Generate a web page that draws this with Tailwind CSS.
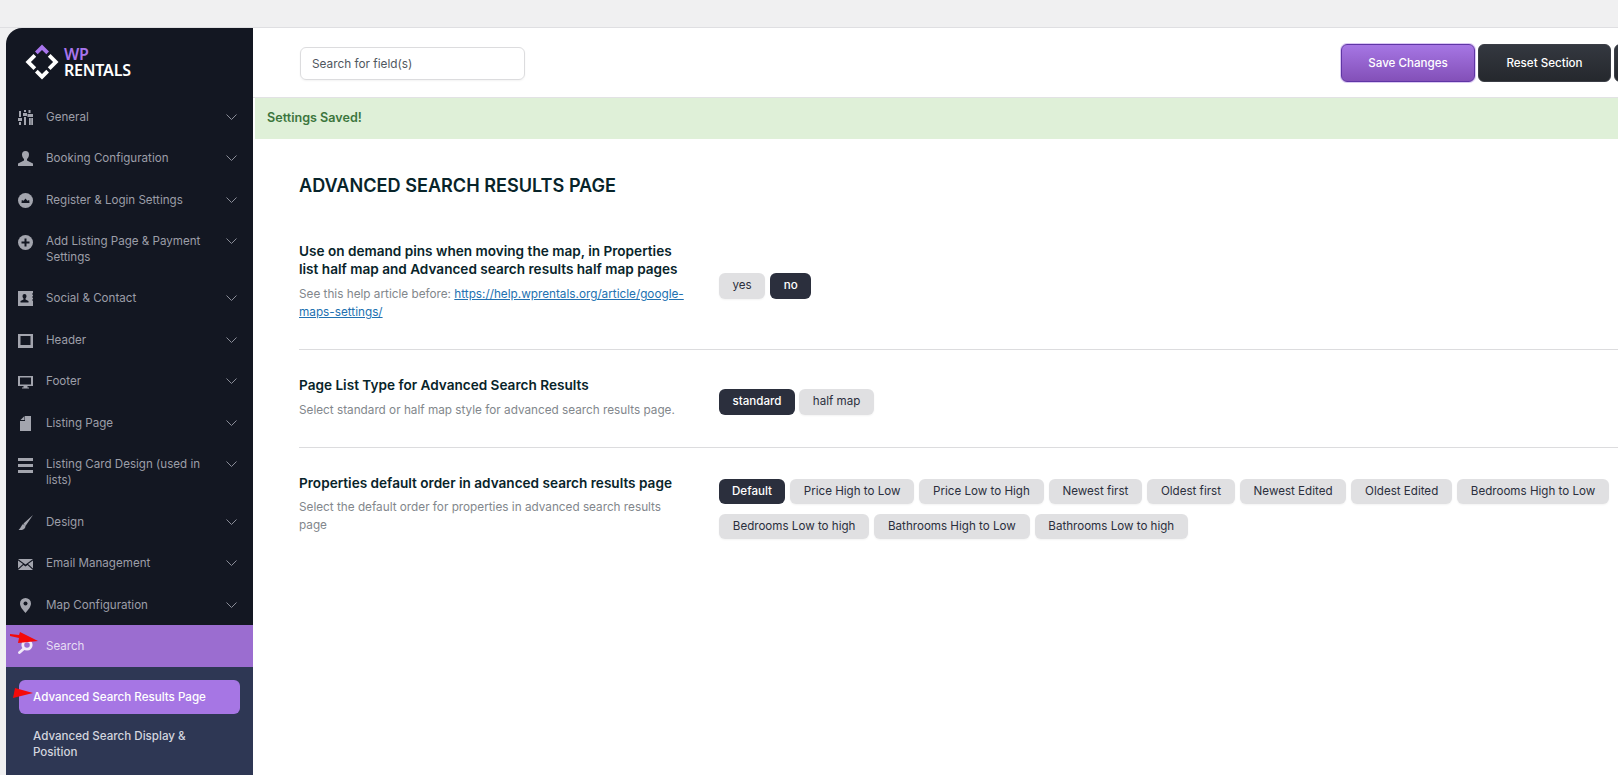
<!DOCTYPE html>
<html lang="en">
  <head>
    <meta charset="UTF-8" />
    <title>WP Rentals Options</title>
    <script src="https://cdn.jsdelivr.net/npm/@tailwindcss/browser@4"></script>
  </head>
  <body class="h-[775px] overflow-hidden bg-[#f0f0f1] font-['Inter',sans-serif] text-[11.6px]">
    <div class="flex h-[775px] flex-col">
      <div class="h-[28px] shrink-0 border-b border-[#dfdfe2]"></div>
      <div class="flex min-h-0 flex-1 pl-[6px]">
        <!-- sidebar -->
        <aside class="relative w-[247px] shrink-0 overflow-hidden rounded-tl-2xl bg-[#131722] text-[#9c9ea8]">
          <div class="flex h-[68px] items-start pl-[19px] pt-[16px]">
            <svg class="h-[36px] w-[34px]" viewBox="0 0 34 36">
              <path d="M10 7.500 17 0.500l7 7-2.700 2.700L17 5.900l-4.300 4.300z" fill="#a875ec" />
              <path d="M8.500 10 0.500 18l8 8 2.700-2.700L5.900 18l5.300-5.300zM25.500 10l8 8-8 8-2.700-2.700L28.100 18l-5.300-5.300zM10 28.500l7 7 7-7-2.700-2.700-4.300 4.300-4.300-4.300z" fill="#fff" />
            </svg>
            <div class="ml-[5px] mt-[2px] font-['Noto_Sans',sans-serif] text-[16px] leading-[16px] font-semibold tracking-[-0.2px]">
              <div class="text-[#a875ec]">WP</div>
              <div class="text-white">RENTALS</div>
            </div>
          </div>

          <nav class="leading-[16px]">
            <a class="flex py-[12.73px] pl-[12px] pr-[16px]">
              <svg class="mt-[1px] h-[15px] w-[15px] shrink-0" viewBox="0 0 15 15" fill="#a3a5ae"><path d="M1 1h2v6H1zM0 8h4v3H0zM1 12h2v3H1zM6 0h2v2H6zM5 3h4v3H5zM6 7h2v8H6zM10.500 0h2v3h-2zM9.500 4H15v3H9.500zM11 8h1.800v7H11zM13.200 8H15v7h-1.800z" /></svg>
              <span class="ml-[13px] flex-1">General</span>
              <svg class="mt-[5px] h-[6px] w-[11px] shrink-0" viewBox="0 0 11 6" fill="none" stroke="#8a8d98"><path d="m.5.500 5 5 5-5" /></svg>
            </a>
            <a class="flex py-[12.73px] pl-[12px] pr-[16px]">
              <svg class="mt-[1px] h-[15px] w-[15px] shrink-0" viewBox="0 0 15 15" fill="#a3a5ae"><path d="M7.500 0a3.500 3.500 0 0 1 3.500 3.500c0 2-1 3.500-2 4.500v1.500l6 3V15H0v-2.500l6-3V8C5 7 4 5.500 4 3.500A3.500 3.500 0 0 1 7.500 0z" /></svg>
              <span class="ml-[13px] flex-1">Booking Configuration</span>
              <svg class="mt-[5px] h-[6px] w-[11px] shrink-0" viewBox="0 0 11 6" fill="none" stroke="#8a8d98"><path d="m.5.500 5 5 5-5" /></svg>
            </a>
            <a class="flex py-[12.73px] pl-[12px] pr-[16px]">
              <svg class="mt-[1px] h-[15px] w-[15px] shrink-0" viewBox="0 0 15 15"><circle cx="7.500" cy="7.500" r="7.500" fill="#a3a5ae" /><path d="M3.500 10 3.800 7l1.800.8L7.500 5.500l1.900 2.300 1.800-.8.300 3z" fill="#131722" /></svg>
              <span class="ml-[13px] flex-1">Register &amp; Login Settings</span>
              <svg class="mt-[5px] h-[6px] w-[11px] shrink-0" viewBox="0 0 11 6" fill="none" stroke="#8a8d98"><path d="m.5.500 5 5 5-5" /></svg>
            </a>
            <a class="flex py-[12.73px] pl-[12px] pr-[16px]">
              <svg class="mt-[2px] h-[15px] w-[15px] shrink-0" viewBox="0 0 15 15"><circle cx="7.500" cy="7.500" r="7.500" fill="#a3a5ae" /><path d="M6.500 3.500h2v3h3v2h-3v3h-2v-3h-3v-2h3z" fill="#131722" /></svg>
              <span class="ml-[13px] flex-1">Add Listing Page &amp; Payment Settings</span>
              <svg class="ml-[10px] mt-[5px] h-[6px] w-[11px] shrink-0" viewBox="0 0 11 6" fill="none" stroke="#8a8d98"><path d="m.5.500 5 5 5-5" /></svg>
            </a>
            <a class="flex py-[12.73px] pl-[12px] pr-[16px]">
              <svg class="mt-[1px] h-[15px] w-[15px] shrink-0" viewBox="0 0 15 15"><path d="M0 0h15v2.500h-1v1h1v2h-1v1h1v2h-1v1h1V15H0z" fill="#a3a5ae" /><path d="M6.500 3a2 2 0 0 1 2 2c0 1-.5 2-1 2.500V8.500l3 1.500v1.500h-8V10l3-1.500v-1C5 7 4.500 6 4.500 5a2 2 0 0 1 2-2z" fill="#131722" /></svg>
              <span class="ml-[13px] flex-1">Social &amp; Contact</span>
              <svg class="mt-[5px] h-[6px] w-[11px] shrink-0" viewBox="0 0 11 6" fill="none" stroke="#8a8d98"><path d="m.5.500 5 5 5-5" /></svg>
            </a>
            <a class="flex py-[12.73px] pl-[12px] pr-[16px]">
              <svg class="mt-[1px] h-[15px] w-[15px] shrink-0" viewBox="0 0 15 15"><path d="M0 1h15v14H0z" fill="#a3a5ae" /><path d="M2.500 3h10v9h-10z" fill="#131722" /></svg>
              <span class="ml-[13px] flex-1">Header</span>
              <svg class="mt-[5px] h-[6px] w-[11px] shrink-0" viewBox="0 0 11 6" fill="none" stroke="#8a8d98"><path d="m.5.500 5 5 5-5" /></svg>
            </a>
            <a class="flex py-[12.73px] pl-[12px] pr-[16px]">
              <svg class="mt-[1px] h-[15px] w-[15px] shrink-0" viewBox="0 0 15 15"><path d="M0 2h15v10H9.500v1.500H11V14.500H4v-1h1.500V12H0z" fill="#a3a5ae" /><path d="M2 3.500h11v7H2z" fill="#131722" /></svg>
              <span class="ml-[13px] flex-1">Footer</span>
              <svg class="mt-[5px] h-[6px] w-[11px] shrink-0" viewBox="0 0 11 6" fill="none" stroke="#8a8d98"><path d="m.5.500 5 5 5-5" /></svg>
            </a>
            <a class="flex py-[12.73px] pl-[12px] pr-[16px]">
              <svg class="mt-[1px] h-[15px] w-[15px] shrink-0" viewBox="0 0 15 15" fill="#a3a5ae"><path d="M7 0h6v15H2V5h5zM2.500 4 6.500 0v4z" /></svg>
              <span class="ml-[13px] flex-1">Listing Page</span>
              <svg class="mt-[5px] h-[6px] w-[11px] shrink-0" viewBox="0 0 11 6" fill="none" stroke="#8a8d98"><path d="m.5.500 5 5 5-5" /></svg>
            </a>
            <a class="flex py-[12.73px] pl-[12px] pr-[16px]">
              <svg class="mt-[2px] h-[15px] w-[15px] shrink-0" viewBox="0 0 15 15" fill="#a3a5ae"><path d="M0 0h15v3H0zM0 6h15v3H0zM0 12h15v3H0z" /></svg>
              <span class="ml-[13px] flex-1">Listing Card Design (used in lists)</span>
              <svg class="ml-[10px] mt-[5px] h-[6px] w-[11px] shrink-0" viewBox="0 0 11 6" fill="none" stroke="#8a8d98"><path d="m.5.500 5 5 5-5" /></svg>
            </a>
            <a class="flex py-[12.73px] pl-[12px] pr-[16px]">
              <svg class="mt-[1px] h-[15px] w-[15px] shrink-0" viewBox="0 0 15 15" fill="#a3a5ae"><path d="M15 0 7.500 11 5 9C3.500 10 3 13 0 15.500 3.500 15.500 7 14.500 7.500 11.500L5.500 8.500z" /></svg>
              <span class="ml-[13px] flex-1">Design</span>
              <svg class="mt-[5px] h-[6px] w-[11px] shrink-0" viewBox="0 0 11 6" fill="none" stroke="#8a8d98"><path d="m.5.500 5 5 5-5" /></svg>
            </a>
            <a class="flex py-[12.73px] pl-[12px] pr-[16px]">
              <svg class="mt-[1px] h-[15px] w-[15px] shrink-0" viewBox="0 0 15 15" fill="#a3a5ae"><path d="M0 3h15L7.500 8.500zM0 4.500v8l5-4.500zM15 4.500v8l-5-4.500zM0 14l5.500-5 2 1.500 2-1.500L15 14z" /></svg>
              <span class="ml-[13px] flex-1">Email Management</span>
              <svg class="mt-[5px] h-[6px] w-[11px] shrink-0" viewBox="0 0 11 6" fill="none" stroke="#8a8d98"><path d="m.5.500 5 5 5-5" /></svg>
            </a>
            <a class="flex py-[12.73px] pl-[12px] pr-[16px]">
              <svg class="mt-[1px] h-[15px] w-[15px] shrink-0" viewBox="0 0 15 15"><path d="M7.500 0A5.500 5.500 0 0 1 13 5.500C13 9 9.500 12.500 7.500 15 5.500 12.500 2 9 2 5.500A5.500 5.500 0 0 1 7.500 0z" fill="#a3a5ae" /><circle cx="7.500" cy="5.500" r="2" fill="#131722" /></svg>
              <span class="ml-[13px] flex-1">Map Configuration</span>
              <svg class="mt-[5px] h-[6px] w-[11px] shrink-0" viewBox="0 0 11 6" fill="none" stroke="#8a8d98"><path d="m.5.500 5 5 5-5" /></svg>
            </a>
            <a class="flex bg-[#9b6dd0] py-[12.73px] pl-[12px] pr-[16px] text-[#e6dcf4]">
              <svg class="mt-[1px] h-[15px] w-[15px] shrink-0" viewBox="0 0 15 15" fill="none"><circle cx="9" cy="6" r="4.200" stroke="#f0eaf8" stroke-width="2.800" /><path d="M6 9.500 1.500 13.500" stroke="#f0eaf8" stroke-width="2.800" stroke-linecap="round" /></svg>
              <span class="ml-[13px] flex-1">Search</span>
            </a>
          </nav>

          <div class="h-[200px] bg-[#2e3754] px-[13px] pt-[13px] font-medium leading-[16px] text-[#d3d5df]">
            <a class="block rounded-md bg-[#a676e4] py-[9px] pl-[14px] text-white">Advanced Search Results Page</a>
            <a class="block py-[14px] pl-[14px] pr-[20px]">Advanced Search Display &amp; Position</a>
          </div>

          <!-- red arrows drawn on top of the screenshot -->
          <svg class="absolute left-0 top-[597px] h-[80px] w-[60px]" viewBox="0 0 60 80" fill="#f50a0a">
            <path d="M4 9l9 1 1-3 18 9-20 2 1-5-9-2z" />
            <path d="M9 63l18 5-20 5z" />
          </svg>
        </aside>

        <!-- main -->
        <main class="min-w-0 flex-1 bg-white">
          <header class="flex h-[70px] items-start border-b border-[#e2e2e4]">
            <input type="text" placeholder="Search for field(s)" class="ml-[47px] mt-[19px] h-[33px] w-[225px] rounded-md border border-[#dcdcde] px-[11px] text-[11.8px] placeholder:text-[#50575e] shadow-xs outline-none" />
            <div class="ml-auto mt-[16px] flex gap-[3px] -mr-[36px]">
              <button class="h-[38px] w-[134px] rounded-md border border-[#5f35a5] bg-gradient-to-b from-[#a676e4] to-[#8350b8] pt-px font-medium text-white ring-1 ring-[#a676e4]/40">Save Changes</button>
              <button class="h-[38px] w-[133px] rounded-md border border-[#3b3e46] bg-gradient-to-b from-[#343840] to-[#25282d] pt-px font-medium text-white">Reset Section</button>
              <button class="h-[38px] w-[40px] rounded-md border border-[#3b3e46] bg-gradient-to-b from-[#343840] to-[#25282d]"></button>
            </div>
          </header>
          <div class="ml-[2px] flex h-[41px] items-center bg-[#dff0d8] pl-[12px] text-[12.6px] font-semibold text-[#3c763d]">Settings Saved!</div>

          <div class="pl-[46px]">
            <h1 class="pt-[35px] text-[18.1px] leading-[22px] font-semibold uppercase text-[#08242a]">Advanced Search Results Page</h1>

            <section class="mt-[20px] flex items-center border-b border-[#dcdcde] pb-[28px] pt-[26px]">
              <div class="w-[385px] shrink-0">
                <h2 class="text-[13.6px] leading-[18px] font-semibold text-[#08242a]">Use on demand pins when moving the map, in Properties list half map and Advanced search results half map pages</h2>
                <p class="mt-[7px] text-[11.75px] leading-[18px] text-[#82878c]">See this help article before: <a class="text-[#2271b1] underline">https://help.wprentals.org/article/google-maps-settings/</a></p>
              </div>
              <div class="ml-[35px] flex flex-wrap gap-x-[5px] gap-y-[10px] pt-[8px]">
                <span class="flex h-[26px] items-center rounded-md bg-[#e0e0e2] px-[13.5px] text-[#2b2f3d] shadow-xs">yes</span>
                <span class="flex h-[26px] items-center rounded-md bg-[#2b2f3d] px-[13.5px] font-medium text-white">no</span>
              </div>
            </section>

            <section class="flex items-center border-b border-[#dcdcde] pb-[28px] pt-[26px]">
              <div class="w-[385px] shrink-0">
                <h2 class="text-[13.6px] leading-[18px] font-semibold text-[#08242a]">Page List Type for Advanced Search Results</h2>
                <p class="mt-[7px] text-[11.75px] leading-[18px] text-[#82878c]">Select standard or half map style for advanced search results page.</p>
              </div>
              <div class="ml-[35px] flex flex-wrap gap-x-[4px] gap-y-[10px] pt-[9px]">
                <span class="flex h-[26px] items-center rounded-md bg-[#2b2f3d] px-[13.5px] font-medium text-white">standard</span>
                <span class="flex h-[26px] items-center rounded-md bg-[#e0e0e2] px-[13.8px] text-[#2b2f3d] shadow-xs">half map</span>
              </div>
            </section>

            <section class="flex items-center pb-[27px] pt-[21px]">
              <div class="w-[385px] shrink-0">
                <h2 class="text-[13.6px] leading-[18px] font-semibold text-[#08242a]">Properties default order in advanced search results page</h2>
                <p class="mt-[6px] text-[11.75px] leading-[18px] text-[#82878c]">Select the default order for properties in advanced search results page</p>
              </div>
              <div class="ml-[35px] flex flex-1 flex-wrap gap-x-[5px] gap-y-[10px] pt-[10px]">
                <span class="flex h-[25px] items-center rounded-md bg-[#2b2f3d] px-[13px] font-medium text-white">Default</span>
                <span class="flex h-[25px] items-center rounded-md bg-[#e0e0e2] px-[13.8px] text-[#2b2f3d] shadow-xs">Price High to Low</span>
                <span class="flex h-[25px] items-center rounded-md bg-[#e0e0e2] px-[13.8px] text-[#2b2f3d] shadow-xs">Price Low to High</span>
                <span class="flex h-[25px] items-center rounded-md bg-[#e0e0e2] px-[13.8px] text-[#2b2f3d] shadow-xs">Newest first</span>
                <span class="flex h-[25px] items-center rounded-md bg-[#e0e0e2] px-[13.8px] text-[#2b2f3d] shadow-xs">Oldest first</span>
                <span class="flex h-[25px] items-center rounded-md bg-[#e0e0e2] px-[13.8px] text-[#2b2f3d] shadow-xs">Newest Edited</span>
                <span class="flex h-[25px] items-center rounded-md bg-[#e0e0e2] px-[13.8px] text-[#2b2f3d] shadow-xs">Oldest Edited</span>
                <span class="flex h-[25px] items-center rounded-md bg-[#e0e0e2] px-[13.8px] text-[#2b2f3d] shadow-xs">Bedrooms High to Low</span>
                <span class="flex h-[25px] items-center rounded-md bg-[#e0e0e2] px-[13.8px] text-[#2b2f3d] shadow-xs">Bedrooms Low to high</span>
                <span class="flex h-[25px] items-center rounded-md bg-[#e0e0e2] px-[13.8px] text-[#2b2f3d] shadow-xs">Bathrooms High to Low</span>
                <span class="flex h-[25px] items-center rounded-md bg-[#e0e0e2] px-[13.8px] text-[#2b2f3d] shadow-xs">Bathrooms Low to high</span>
              </div>
            </section>
          </div>
        </main>
      </div>
    </div>
  </body>
</html>
